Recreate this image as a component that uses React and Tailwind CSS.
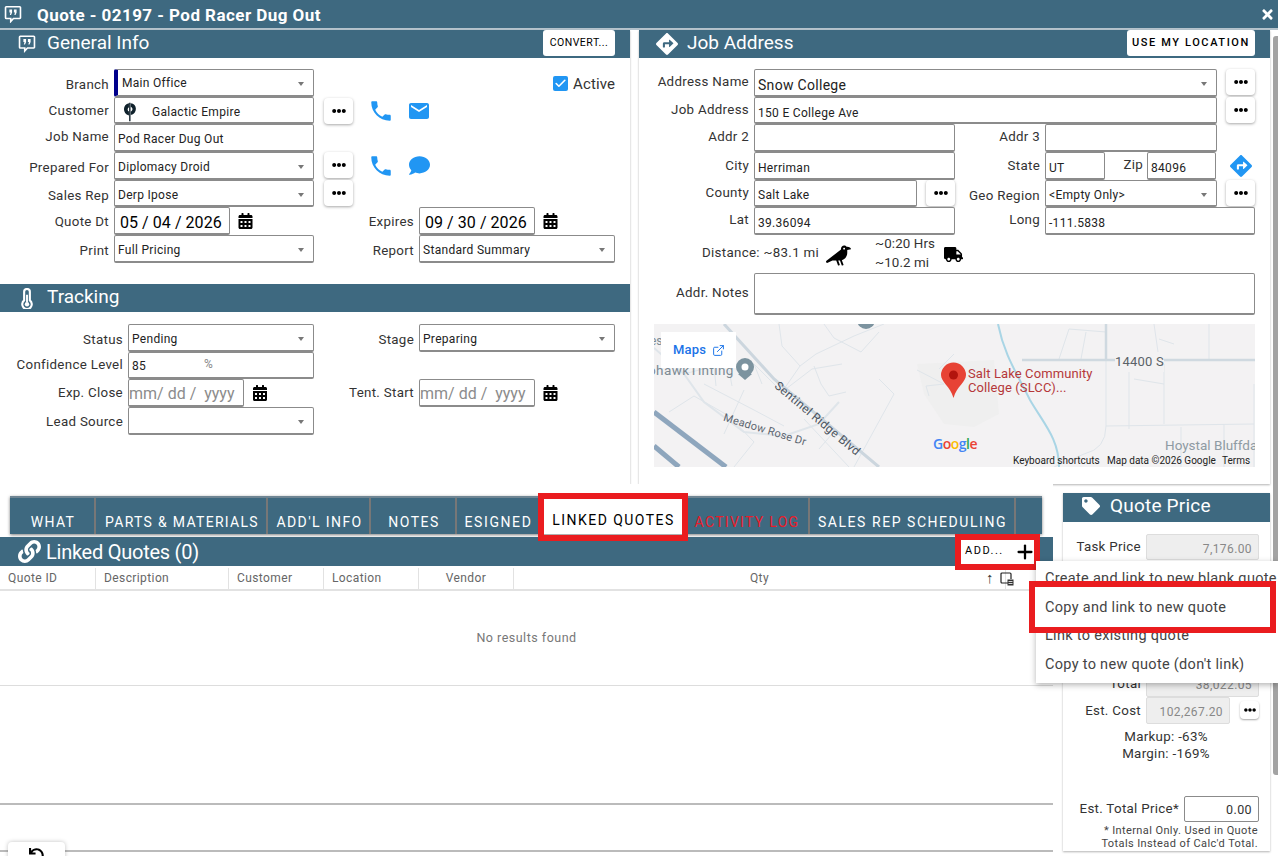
import React from "react";
import { FaCalendarAlt, FaCrow, FaDirections, FaEllipsisH, FaLink, FaTag, FaTruck, FaUndo, FaComment, FaTimes } from "react-icons/fa";
import { MdPhone, MdEmail } from "react-icons/md";
import { ExternalLink, Plus, Check } from "lucide-react";

const QuoteIcon = ({ className }) => (
  <svg viewBox="0 0 20 20" className={className} fill="none">
    <path d="M2.500 2h15a.8.8 0 0 1 .8.8v11.400a.8.8 0 0 1-.8.8H10.500l-3 3.300V15H2.500a.8.8 0 0 1-.8-.8V2.800a.8.8 0 0 1 .8-.8z" stroke="white" strokeWidth="1.800" />
    <path d="M6 5h3v3.200L7.800 11H6.500l.7-2.800H6zM11 5h3v3.200L12.800 11h-1.300l.7-2.800H11z" fill="white" />
  </svg>
);

const ThermoIcon = ({ className }) => (
  <svg viewBox="0 0 14 22" className={className} fill="none">
    <path d="M4 4a3 3 0 0 1 6 0v9a5 5 0 1 1-6 0z" stroke="white" strokeWidth="2.200" />
    <path d="M7 7v8" stroke="white" strokeWidth="2" />
    <circle cx="7" cy="17" r="2.300" fill="white" />
  </svg>
);

const Lbl = ({ className = "", children }) => (
  <div className={"flex shrink-0 items-center justify-end whitespace-nowrap text-[13.330px] tracking-[0.3px] text-[#333] " + className}>{children}</div>
);

const Caret = () => (
  <span className="absolute right-[9px] top-[12px] h-0 w-0 border-x-[3.500px] border-t-[4px] border-x-transparent border-t-[#777]" />
);

const Box = ({ className = "", caret, children }) => (
  <div className={"relative flex shrink-0 items-center overflow-hidden whitespace-nowrap rounded-[2px] border border-b-2 border-[#8b8b8b] bg-white pl-[3px] text-[12px] tracking-[0.3px] text-[#222] " + className}>
    {children}
    {caret && <Caret />}
  </div>
);

const Placeholder = () => (
  <span className="ml-[-3px] text-[16px] tracking-[0px] text-[#8c8c8c]">mm/ dd /&nbsp; yyyy</span>
);

const Dots = ({ className = "" }) => (
  <div className={"flex h-[26px] w-[29px] shrink-0 items-center justify-center rounded-[4px] bg-white text-black shadow-[0_1px_3px_rgba(0,0,0,0.35)] " + className}>
    <FaEllipsisH size={14} />
  </div>
);

const Row = ({ className = "", children }) => <div className={"flex h-[27.700px] items-stretch " + className}>{children}</div>;

const Cal = ({ className = "" }) => (
  <div className={"flex w-[15px] shrink-0 items-center justify-center text-black " + className}>
    <FaCalendarAlt size={16} />
  </div>
);

const Header = ({ icon, title, button, className = "" }) => (
  <div className={"flex h-[28px] items-start bg-[#3e6980] pr-[15px] text-white " + className}>
    {icon}
    <div className="h-[28px] whitespace-nowrap text-[19px] leading-[26px]">{title}</div>
    {button}
  </div>
);

const HeadBtn = ({ className = "", children }) => (
  <div className={"ml-auto flex h-[26px] items-center justify-center rounded-[3px] bg-white text-black " + className}>{children}</div>
);

const Tab = ({ className = "", children }) => (
  <div className={"flex h-full shrink-0 items-start justify-center whitespace-nowrap border-r-2 border-[#777] pt-[15px] text-[14px] leading-[18px] " + className}>{children}</div>
);

const Th = ({ className = "", children }) => (
  <div className={"flex h-full shrink-0 items-center border-r border-[#e2e2e2] pb-[1px] text-[12px] tracking-[0.4px] text-[#666] " + className}>{children}</div>
);

const MapCanvas = () => (
  <div className="relative ml-[15px] mt-[9px] h-[143px] w-[601px] overflow-hidden bg-[#f3f2f3]">
    <svg viewBox="0 0 601 143" className="absolute inset-0 h-full w-full" fill="none">
      <path d="M263 40 L340 36 L345 90 L320 103 L290 100 L270 70z" fill="#efefef" />
      <g stroke="#dfe5ea" strokeWidth="1">
        <path d="M0 24 L30 50 L50 78 L90 108 L130 112 L165 100 L185 78" strokeWidth="2" />
        <path d="M15 88 L40 72 L75 92 L100 118 L80 143" />
        <path d="M50 60 L100 86 L130 102" />
        <path d="M125 0 L128 22 L146 42 L128 68 L100 40" />
        <path d="M146 42 L162 30 L200 12 L230 0" />
        <path d="M128 68 L158 45 L188 40" />
        <path d="M160 42 L167 60 L175 72 L192 68" />
        <path d="M170 0 L180 14 L207 28 L225 8" />
        <path d="M30 50 L60 42 L62 62 M75 46 L78 62 M100 40 L108 60" />
        <path d="M150 95 L195 143 M178 110 L165 125 M90 66 L70 110" />
        <path d="M285 45 L300 30 M263 46 L290 60 L272 62 L275 72" />
        <path d="M405 35 L415 5 L452 8 M427 35 L432 8" />
        <path d="M452 35 L452 102 Q452 125 430 130 L400 143 M475 40 L475 105 M510 40 L510 100 M480 55 L510 60" />
        <path d="M500 0 L505 35 M520 20 L505 15 M555 0 L555 35" />
        <path d="M600 60 L600 143 M452 102 L600 100 M527 103 L527 143 M570 100 L570 143" />
        <path d="M225 55 L240 70 L200 143" />
      </g>
      <path d="M70 0 L120 55 L225 143" stroke="#ccd6de" strokeWidth="3" />
      <path d="M0 88 L72 143" stroke="#8ea6bd" strokeWidth="5" />
      <path d="M0 122 L25 143" stroke="#8ea6bd" strokeWidth="5" />
      <path d="M344 0 C350 30 362 48 376 76 C390 100 405 115 405 143" stroke="#a9d5e5" strokeWidth="2" />
      <path d="M368 36 L601 36 M452 0 L452 36" stroke="#cfd9e0" strokeWidth="2.500" />
      <circle cx="91" cy="43" r="9" fill="#7c939f" />
      <circle cx="91" cy="43" r="3.500" fill="white" />
      <path d="M84 50 L91 56 L98 50z" fill="#7c939f" />
      <circle cx="212" cy="-4" r="9" fill="#7c939f" />
      <path d="M299.500 74 C296 62 287 58 287 51 A12.500 12.500 0 0 1 312 51 C312 58 303 62 299.500 74z" fill="#e74335" />
      <circle cx="299.500" cy="51" r="4.500" fill="#b3140e" />
    </svg>
    <div className="absolute left-[-6px] top-[36px] text-[13.500px] tracking-[0.4px] text-[#7c8a93]">ohawkTinting</div>
    <div className="absolute left-[-4px] top-[8px] text-[12px] text-[#7c8a93]">es</div>
    <div className="absolute left-[128px] top-[53px] origin-top-left rotate-[40deg] whitespace-nowrap text-[12px] tracking-[0.3px] text-[#4c5560]">Sentinel Ridge Blvd</div>
    <div className="absolute left-[72px] top-[86px] origin-top-left rotate-[17deg] whitespace-nowrap text-[11px] tracking-[0.2px] text-[#5c6570]">Meadow Rose Dr</div>
    <div className="absolute left-[314px] top-[43px] whitespace-nowrap text-[13px] leading-[14px] tracking-[0.1px] text-[#b5383a]">Salt Lake Community<br />College (SLCC)...</div>
    <div className="absolute left-[461px] top-[28px] bg-[#f3f2f3] text-[13px] tracking-[0.2px] text-[#5a6268]">14400 S</div>
    <div className="absolute left-[511px] top-[111px] whitespace-nowrap text-[13.500px] text-[#8f9ba3]">Hoystal Bluffda</div>
    <div className="absolute left-[279px] top-[109px] font-['Open_Sans',sans-serif] text-[14px] font-semibold tracking-[-0.5px]">
      <span className="text-[#4285f4]">G</span><span className="text-[#ea4335]">o</span><span className="text-[#fbbc05]">o</span><span className="text-[#4285f4]">g</span><span className="text-[#34a853]">l</span><span className="text-[#ea4335]">e</span>
    </div>
    <div className="absolute left-[359px] top-[131px] whitespace-nowrap text-[10px] leading-[12px] text-[#222]">Keyboard shortcuts</div>
    <div className="absolute left-[453px] top-[131px] whitespace-nowrap text-[10px] leading-[12px] text-[#222]">Map data ©2026 Google</div>
    <div className="absolute left-[568px] top-[131px] whitespace-nowrap text-[10px] leading-[12px] text-[#222]">Terms</div>
    <div className="absolute left-[7px] top-[8px] flex h-[36px] w-[75px] items-center gap-[6px] bg-white pl-[12px] text-[13px] font-medium tracking-[0.2px] text-[#1a73e8]">
      Maps <ExternalLink size={13} strokeWidth={1.800} />
    </div>
  </div>
);

const PriceBox = ({ className = "", children }) => (
  <div className={"flex items-center justify-end rounded-[2px] border border-[#ddd] bg-[#eee] pr-[6px] pt-[3px] text-[12px] tracking-[0.4px] text-[#888] " + className}>{children}</div>
);

const panelShadow = "bg-white shadow-[0_1px_2px_rgba(0,0,0,0.3)]";

export default function App() {
  return (
    <div className="relative h-[856px] w-[1278px] overflow-hidden bg-white font-['Roboto',sans-serif]">
      {/* Title */}
      <div className="flex h-[30px] items-center border-b-2 border-[#b5c3cc] bg-[#3e6980] text-white">
        <QuoteIcon className="ml-[4px] h-[18px] w-[18px]" />
        <div className="ml-[15px] pt-[3px] text-[17px] font-bold tracking-[0.45px]">Quote - 02197 - Pod Racer Dug Out</div>
        <FaTimes className="ml-auto mr-[3px]" size={15} />
      </div>

      {/* Top panels */}
      <div className="flex h-[454px] items-stretch">
        <div className={"w-[630px] " + panelShadow}>
          <Header
            title="General Info"
            icon={<QuoteIcon className="ml-[18px] mr-[11px] mt-[4px] h-[19px] w-[18px]" />}
            button={<HeadBtn className="w-[72px] text-[10.500px] tracking-[0.5px]">CONVERT...</HeadBtn>}
          />
          <div className="pt-[11px]">
            <Row>
              <Lbl className="w-[109px] pt-[4px]">Branch</Lbl>
              <Box caret className="ml-[5px] w-[200px] border-l-[4px] border-l-[#00008b] pt-[2px]"><span className="ml-px">Main Office</span></Box>
              <div className="ml-auto mr-[15px] flex items-center gap-[5px] pt-[2px] text-[15px] tracking-[0.1px] text-[#333]">
                <span className="flex h-[15px] w-[15px] items-center justify-center rounded-[2px] bg-[#2196f3] text-white"><Check size={13} strokeWidth={3} /></span>
                Active
              </div>
            </Row>
            <Row>
              <Lbl className="w-[109px]">Customer</Lbl>
              <Box className="ml-[5px] w-[200px] pt-[3px]">
                <svg viewBox="0 0 16 24" className="ml-[4px] h-[21px] w-[16px]">
                  <path d="M6.800 2.500 C-0.500 3.500 -1 14.500 6.800 16.500 L6.800 12 C4.800 11 4.800 8 6.800 7z M8.800 2.500 C16.500 3 17 14.500 8.800 16 L8.800 12 C11.500 11 11.500 7.500 8.800 6.500z" fill="#10222c" />
                  <path d="M7.800 2 L7.800 23" stroke="#10222c" strokeWidth="1.600" />
                </svg>
                <span className="ml-[14px]">Galactic Empire</span>
              </Box>
              <Dots className="ml-[10px] mt-[1px]" />
              <MdPhone className="ml-[15px] mt-[1px] text-[#2196f3]" size={26} />
              <MdEmail className="ml-[13px] mt-[2px] text-[#2196f3]" size={24} />
            </Row>
            <Row>
              <Lbl className="w-[109px] pb-[2px]">Job Name</Lbl>
              <Box className="ml-[5px] w-[200px] pt-[2px]">Pod Racer Dug Out</Box>
            </Row>
            <Row>
              <Lbl className="w-[109px] pt-[4px]">Prepared For</Lbl>
              <Box caret className="ml-[5px] w-[200px] pt-[4px]">Diplomacy Droid</Box>
              <Dots className="ml-[10px]" />
              <MdPhone className="ml-[15px] mt-[1px] text-[#2196f3]" size={26} />
              <FaComment className="ml-[15px] mt-[3px] text-[#2196f3]" size={21} />
            </Row>
            <Row>
              <Lbl className="w-[109px] pt-[4px]">Sales Rep</Lbl>
              <Box caret className="ml-[5px] w-[200px] pt-[4px]">Derp Ipose</Box>
              <Dots className="ml-[10px]" />
            </Row>
            <Row>
              <Lbl className="w-[109px] pt-[2px]">Quote Dt</Lbl>
              <Box className="ml-[5px] w-[116px] pt-[4px] text-[16px] tracking-[0.05px] text-black"><span className="ml-[2px]">05 / 04 / 2026</span></Box>
              <Cal className="ml-[8px]" />
              <Lbl className="w-[161px] pt-[2px]">Expires</Lbl>
              <Box className="ml-[5px] w-[116px] pt-[4px] text-[16px] tracking-[0.05px] text-black"><span className="ml-[2px]">09 / 30 / 2026</span></Box>
              <Cal className="ml-[8px]" />
            </Row>
            <Row>
              <Lbl className="w-[109px] pt-[4px]">Print</Lbl>
              <Box caret className="ml-[5px] w-[200px] pt-[4px]">Full Pricing</Box>
              <Lbl className="w-[100px] pt-[4px]">Report</Lbl>
              <Box caret className="ml-[5px] w-[196px] pt-[4px]">Standard Summary</Box>
            </Row>
          </div>

          <Header
            className="mt-[21px]"
            title="Tracking"
            icon={<ThermoIcon className="ml-[20px] mr-[13px] mt-[4px] h-[21px] w-[14px]" />}
          />
          <div className="pt-[12px]">
            <Row>
              <Lbl className="w-[123px] pt-[4px]">Status</Lbl>
              <Box caret className="ml-[5px] w-[186px] pt-[3px]">Pending</Box>
              <Lbl className="w-[100px] pt-[4px]">Stage</Lbl>
              <Box caret className="ml-[5px] w-[196px] pt-[3px]">Preparing</Box>
            </Row>
            <Row>
              <Lbl className="w-[123px] pb-[1px]">Confidence Level</Lbl>
              <Box className="ml-[5px] w-[186px] pt-[2px]">
                85<span className="ml-[58px] mt-[-4px] text-[#888]">%</span>
              </Box>
            </Row>
            <Row>
              <Lbl className="w-[123px] pb-[1px]">Exp. Close</Lbl>
              <Box className="ml-[5px] w-[116px] pt-[3px]"><Placeholder /></Box>
              <Cal className="ml-[8px] w-[16px]" />
              <Lbl className="w-[146px] pb-[1px]">Tent. Start</Lbl>
              <Box className="ml-[5px] w-[116px] pt-[3px]"><Placeholder /></Box>
              <Cal className="ml-[8px]" />
            </Row>
            <Row>
              <Lbl className="w-[123px] pt-[2px]">Lead Source</Lbl>
              <Box caret className="ml-[5px] w-[186px]" />
            </Row>
          </div>
        </div>

        <div className={"ml-[9px] w-[631px] " + panelShadow}>
          <Header
            title="Job Address"
            icon={<FaDirections className="ml-[17px] mr-[9px] mt-[3px]" size={22} />}
            button={<HeadBtn className="w-[128px] text-[11px] font-medium tracking-[1.600px]">USE MY LOCATION</HeadBtn>}
          />
          <div className="pt-[11px]">
            <Row>
              <Lbl className="w-[110px] pb-[2px]">Address Name</Lbl>
              <Box caret className="ml-[5px] w-[463px] pt-[7px] text-[14px] tracking-[0.2px]">Snow College</Box>
              <Dots className="ml-[9px]" />
            </Row>
            <Row>
              <Lbl className="w-[110px] pb-[2px]">Job Address</Lbl>
              <Box className="ml-[5px] w-[463px] pt-[5px]">150 E College Ave</Box>
              <Dots className="ml-[9px]" />
            </Row>
            <Row>
              <Lbl className="w-[110px] pb-[2px]">Addr 2</Lbl>
              <Box className="ml-[5px] w-[201px]" />
              <Lbl className="w-[85px] pb-[2px]">Addr 3</Lbl>
              <Box className="ml-[5px] w-[172px]" />
            </Row>
            <Row>
              <Lbl className="w-[110px]">City</Lbl>
              <Box className="ml-[5px] w-[201px] pt-[5px]">Herriman</Box>
              <Lbl className="w-[85px]">State</Lbl>
              <Box className="ml-[5px] w-[60px] pt-[5px]">UT</Box>
              <Lbl className="w-[38px] pb-[2px]">Zip</Lbl>
              <Box className="ml-[4px] w-[69px] pt-[5px]">84096</Box>
              <FaDirections className="ml-[14px] mt-[3px] text-[#2196f3]" size={22} />
            </Row>
            <Row>
              <Lbl className="w-[110px] pb-[2px]">County</Lbl>
              <Box className="ml-[5px] w-[163px] pt-[3px]">Salt Lake</Box>
              <Dots className="ml-[9px]" />
              <Lbl className="w-[85px] pt-[4px]">Geo Region</Lbl>
              <Box caret className="ml-[5px] w-[172px] pt-[3px]">&lt;Empty Only&gt;</Box>
              <Dots className="ml-[9px]" />
            </Row>
            <Row>
              <Lbl className="w-[110px] pb-[2px]">Lat</Lbl>
              <Box className="ml-[5px] w-[201px] pt-[4px]">39.36094</Box>
              <Lbl className="w-[85px] pb-[2px]">Long</Lbl>
              <Box className="ml-[5px] w-[210px] pt-[4px]">-111.5838</Box>
            </Row>
            <div className="flex h-[38px] pl-[63px] text-[13.330px] tracking-[0.3px] text-[#333]">
              <div className="mt-[8px] whitespace-nowrap">Distance: ~83.1 mi</div>
              <FaCrow className="ml-[7px] mt-[8px] text-black" size={25} />
              <div className="ml-[24px] mt-[-1px] whitespace-nowrap leading-[19px] tracking-[0.1px]">~0:20 Hrs<br />~10.2 mi</div>
              <FaTruck className="ml-[9px] mt-[10px] text-black" size={19} />
            </div>
            <div className="flex h-[42px]">
              <Lbl className="w-[110px] pb-[3px]">Addr. Notes</Lbl>
              <Box className="ml-[5px] w-[501px] border-b" />
            </div>
            <MapCanvas />
          </div>
        </div>
      </div>

      {/* Bottom */}
      <div className="flex">
        <div className="relative h-[372px] w-[1053px] bg-white">
          <div className="ml-[10px] mt-[12px] flex h-[38px] w-[1032px] border-t-2 border-[#6f8593] bg-[#3e6980] shadow-[0_1px_3px_rgba(0,0,0,0.5)]">
            <Tab className="w-[86px] pl-[2px] tracking-[1.300px] text-white">WHAT</Tab>
            <Tab className="w-[172px] pl-[2px] tracking-[1.300px] text-white">PARTS &amp; MATERIALS</Tab>
            <Tab className="w-[103px] pl-[2px] tracking-[1.400px] text-white">ADD'L INFO</Tab>
            <Tab className="w-[86px] pl-[2px] tracking-[1.500px] text-white">NOTES</Tab>
            <Tab className="w-[83px] border-r-0 pl-[2px] tracking-[1.600px] text-white">ESIGNED</Tab>
            <div className="relative h-full w-[146px] shrink-0 bg-white pl-[1px] pt-[13px] text-center text-[14px] leading-[18px] tracking-[1.450px] text-black">
              LINKED QUOTES
              <span className="absolute left-[-2px] right-[-2px] top-[-5px] bottom-[-7px] border-[6px] border-[#ea1c1f]" />
            </div>
            <Tab className="w-[124px] tracking-[1.300px] text-[#ea1c2a]">ACTIVITY LOG</Tab>
            <Tab className="w-[206px] pl-[1px] tracking-[1.550px] text-white">SALES REP SCHEDULING</Tab>
          </div>

          <div className="mt-[3px] flex h-[29px] items-center bg-[#3e6980] pl-[18px] text-white">
            <FaLink size={23} />
            <div className="ml-[5px] whitespace-nowrap text-[20px] tracking-[-0.25px]">Linked Quotes (0)</div>
            <div className="relative ml-auto mr-[19px] flex h-[24px] w-[73px] items-center bg-white pl-[4px] text-[11px] tracking-[1.500px] text-black">
              ADD...
              <Plus className="absolute right-[-2px] top-[1px] text-black" size={22} strokeWidth={2.500} />
              <span className="absolute left-[-6px] right-[-6px] top-[-6px] bottom-[-6px] border-[6px] border-[#ea1c1f]" />
            </div>
          </div>

          <div className="mt-[2px] flex h-[23px] border-b-2 border-[#e2e2e2]">
            <Th className="w-[96px] pl-[8px]">Quote ID</Th>
            <Th className="w-[133px] pl-[8px]">Description</Th>
            <Th className="w-[95px] pl-[8px]">Customer</Th>
            <Th className="w-[95px] pl-[8px]">Location</Th>
            <Th className="w-[95px] justify-center">Vendor</Th>
            <Th className="w-[492px] justify-center">Qty</Th>
            <div className="flex h-full w-[47px] items-center border-r border-[#e2e2e2]">
              <span className="ml-[-20px] text-[15px] leading-[15px] text-[#333]">↑</span>
              <svg viewBox="0 0 14 14" className="ml-[6px] h-[14px] w-[14px]" fill="none">
                <path d="M9 11H2a1 1 0 0 1-1-1V2a1 1 0 0 1 1-1h8a1 1 0 0 1 1 1v5" stroke="#222" strokeWidth="1.200" />
                <rect x="7.500" y="7.500" width="6" height="6" fill="#333" />
                <path d="M8.500 9.500h4M8.500 11.500h4" stroke="white" strokeWidth="0.800" />
              </svg>
            </div>
          </div>

          <div className="flex h-[95px] items-center justify-center border-b border-[#ddd] pt-[1px] text-[12.500px] tracking-[0.5px] text-[#777]">No results found</div>
          <div className="h-[119px] border-b-2 border-[#bbb]" />
          <div className="h-[47px] border-b-2 border-[#bbb]" />

          <div className="absolute left-[8px] top-[358px] flex h-[40px] w-[57px] justify-center rounded-[4px] bg-white pt-[6px] text-black shadow-[0_0_4px_rgba(0,0,0,0.25)]">
            <FaUndo size={15} />
          </div>
        </div>

        <div className={"ml-[10px] mt-[9px] h-[358px] w-[207px] " + panelShadow}>
          <div className="flex h-[29px] items-center bg-[#3e6980] pb-[3px] pl-[19px] text-white">
            <FaTag size={18} />
            <div className="ml-[10px] text-[19px] tracking-[0.2px]">Quote Price</div>
          </div>
          <div className="mt-[12px] flex h-[26px] items-stretch">
            <Lbl className="w-[78px]">Task Price</Lbl>
            <PriceBox className="ml-[5px] w-[113px]">7,176.00</PriceBox>
          </div>
          <div className="h-[110px]" />
          <div className="flex h-[27px] items-stretch">
            <Lbl className="w-[78px]">Total</Lbl>
            <PriceBox className="ml-[5px] w-[113px]">38,022.05</PriceBox>
          </div>
          <div className="flex h-[27px] items-stretch">
            <Lbl className="w-[78px]">Est. Cost</Lbl>
            <PriceBox className="ml-[5px] w-[84px]">102,267.20</PriceBox>
            <div className="ml-[10px] mt-[4px] flex h-[18px] w-[19px] items-center justify-center rounded-[4px] bg-white text-black shadow-[0_1px_2px_rgba(0,0,0,0.35)]">
              <FaEllipsisH size={12} />
            </div>
          </div>
          <div className="mt-[4px] w-[206px] text-center text-[13.330px] leading-[17px] tracking-[0.3px] text-[#333]">Markup: -63%<br />Margin: -169%</div>
          <div className="mt-[34px] flex h-[26px] items-stretch">
            <Lbl className="w-[116px]">Est. Total Price*</Lbl>
            <div className="ml-[5px] flex w-[75px] items-center justify-end rounded-[2px] border border-[#8b8b8b] pr-[6px] pt-[3px] text-[12.500px] tracking-[0.4px] text-[#333]">0.00</div>
          </div>
          <div className="mr-[12px] mt-[2px] text-right text-[11px] leading-[13px] tracking-[0.4px] text-[#444]">* Internal Only. Used in Quote<br />Totals Instead of Calc'd Total.</div>
        </div>
      </div>

      {/* Scrollbar */}
      <div className="absolute right-0 top-[36px] h-[739px] w-[5px] rounded-l-[3px] bg-[#a3a3a3]" />

      {/* Dropdown menu */}
      <div className="absolute left-[1036px] top-[561px] h-[122px] w-[242px] overflow-hidden bg-white pt-[4px] text-[14.500px] text-[#444] shadow-[0_2px_6px_rgba(0,0,0,0.3)]">
        <div className="flex h-[28.500px] items-center whitespace-nowrap pl-[9px] tracking-[0.3px]">Create and link to new blank quote</div>
        <div className="h-[28.500px]" />
        <div className="flex h-[28.500px] items-center whitespace-nowrap pl-[9px] tracking-[0.3px]">Link to existing quote</div>
        <div className="flex h-[28.500px] items-center whitespace-nowrap pl-[9px] tracking-[0.3px]">Copy to new quote (don't link)</div>
      </div>
      <div className="absolute left-[1029px] top-[581px] flex h-[52px] w-[247px] items-center border-[6px] border-[#ea1c1f] bg-white pl-[10px] pt-[1px] text-[14.500px] tracking-[0.3px] text-[#444]">Copy and link to new quote</div>
    </div>
  );
}
